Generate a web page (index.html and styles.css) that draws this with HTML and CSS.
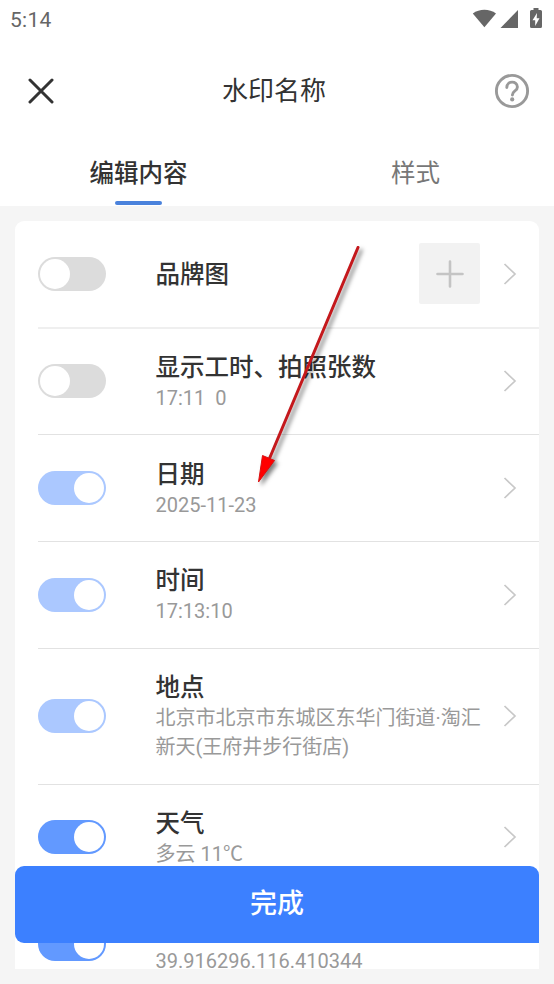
FILE: index.html
```html
<!DOCTYPE html>
<html lang="zh-CN">
<head>
<meta charset="utf-8">
<title>水印名称</title>
<link rel="stylesheet" href="styles.css">
</head>
<body>
<div class="screen">
  <div class="status">
    <span class="clock">5:14</span>
    <svg class="status-icons" width="72" height="24" viewBox="0 0 72 24">
      <path d="M.8 5.400C7.500.4 17.300.4 24 5.400L12.400 19.200z"/>
      <path d="M46 2v18H28.500z"/>
      <path fill-rule="evenodd" d="M61.500 0h5v2h2q1.500 0 1.500 1.500V18.500q0 1.500-1.500 1.500h-9q-1.500 0-1.500-1.500V3.500q0-1.500 1.500-1.500h2zM65 5l-4.500 7.200h2.700V18L67.500 10.200h-2.800z"/>
    </svg>
  </div>
  <header class="header">
    <svg class="close" width="26" height="26" viewBox="0 0 26 26"><path d="M2 2l22 22M24 2L2 24"/></svg>
    <h1>水印名称</h1>
    <svg class="help" width="36" height="36" viewBox="0 0 36 36">
      <circle cx="18" cy="18" r="15.600"/>
      <path d="M12.800 14.500c0-7 10.600-7 10.600-.6 0 4.400-5 3.600-5 8.200"/>
      <circle class="dot" cx="18.200" cy="26.400" r="2.100"/>
    </svg>
  </header>
  <nav class="tabs">
    <div class="tab active">编辑内容</div>
    <div class="tab">样式</div>
  </nav>
  <main class="card">
    <section class="row first">
      <i class="switch"></i>
      <div class="text"><h2>品牌图</h2></div>
      <div class="add"><svg width="28" height="28" viewBox="0 0 28 28"><path d="M14 1.500v25M1.500 14h25"/></svg></div>
      <svg class="chev" width="14" height="24" viewBox="0 0 14 24"><path d="M1.500 2L12 12 1.500 22"/></svg>
    </section>
    <section class="row">
      <i class="switch"></i>
      <div class="text"><h2>显示工时、拍照张数</h2><p class="spaced">17:11  0</p></div>
      <svg class="chev" width="14" height="24" viewBox="0 0 14 24"><path d="M1.500 2L12 12 1.500 22"/></svg>
    </section>
    <section class="row">
      <i class="switch locked"></i>
      <div class="text"><h2>日期</h2><p>2025-11-23</p></div>
      <svg class="chev" width="14" height="24" viewBox="0 0 14 24"><path d="M1.500 2L12 12 1.500 22"/></svg>
    </section>
    <section class="row">
      <i class="switch locked"></i>
      <div class="text"><h2>时间</h2><p>17:13:10</p></div>
      <svg class="chev" width="14" height="24" viewBox="0 0 14 24"><path d="M1.500 2L12 12 1.500 22"/></svg>
    </section>
    <section class="row tall">
      <i class="switch locked"></i>
      <div class="text"><h2>地点</h2><p>北京市北京市东城区东华门街道·淘汇<br>新天(王府井步行街店)</p></div>
      <svg class="chev" width="14" height="24" viewBox="0 0 14 24"><path d="M1.500 2L12 12 1.500 22"/></svg>
    </section>
    <section class="row">
      <i class="switch on"></i>
      <div class="text"><h2>天气</h2><p>多云 11℃</p></div>
      <svg class="chev" width="14" height="24" viewBox="0 0 14 24"><path d="M1.500 2L12 12 1.500 22"/></svg>
    </section>
    <section class="row">
      <i class="switch on"></i>
      <div class="text"><h2>经纬度</h2><p>39.916296.116.410344</p></div>
    </section>
  </main>
  <button class="done">完成</button>
  <svg class="arrow" width="130" height="260" viewBox="240 235 130 260">
    <path class="shaft" d="M358 247.500L268 462"/>
    <path class="head" d="M258.500 482L262.500 455.500L274.500 460.500z"/>
  </svg>
</div>
</body>
</html>
```
FILE: styles.css
```css
* { box-sizing: border-box; }
body { margin: 0; font-family: Roboto, "Noto Sans CJK SC", sans-serif; }
h1, h2, p { margin: 0; }
svg { display: block; flex: none; }

.screen {
  position: relative;
  width: 554px;
  height: 984px;
  overflow: hidden;
  background: #f5f5f5;
}

.status {
  display: flex;
  justify-content: space-between;
  align-items: flex-start;
  height: 40px;
  padding: 8px 10px 0 10px;
  background: #fff;
}
.clock { font-size: 21px; line-height: 24px; color: #666; letter-spacing: .3px; }
.status-icons { fill: #666; }

.header {
  display: flex;
  justify-content: space-between;
  align-items: center;
  height: 102px;
  padding: 0 24px 0 28px;
  background: #fff;
}
.header h1 { font-size: 26px; line-height: 36px; font-weight: 400; color: #333; }
.close { stroke: #333; stroke-width: 3; stroke-linecap: round; }
.help { fill: none; stroke: #999; stroke-width: 2.9; stroke-linecap: round; }
.help .dot { fill: #999; stroke: none; }

.tabs { display: flex; height: 64px; background: #fff; }
.tab {
  display: flex;
  flex: 1;
  flex-direction: column;
  align-items: center;
  justify-content: space-between;
  padding: 14px 0 1px;
  font-size: 24.500px;
  line-height: 36px;
  color: #777;
}
.tab.active { color: #333; font-weight: 500; }
.tab.active::after { content: ""; width: 47px; height: 4px; border-radius: 2px; background: #4a82dc; }

.card {
  width: 524px;
  height: 748px;
  margin: 15px 0 0 15px;
  overflow: hidden;
  border-radius: 9px 9px 0 0;
  background: #fff;
}
.row {
  display: flex;
  align-items: center;
  height: 106.700px;
  margin-left: 23px;
  padding-right: 22px;
  border-bottom: 1px solid #e2e2e2;
}
.row.first { height: 107.500px; border-bottom: 2px solid #efefef; }
.row.tall { height: 136px; }

.switch {
  position: relative;
  flex: none;
  width: 68px;
  height: 34px;
  border-radius: 17px;
  background: #dcdcdc;
}
.switch::after {
  content: "";
  position: absolute;
  top: 2px;
  left: 2px;
  width: 30px;
  height: 30px;
  border-radius: 50%;
  background: #fff;
}
.switch.locked { background: #abc8ff; }
.switch.on { background: #6299ff; }
.switch.locked::after, .switch.on::after { left: 36px; }

.text { flex: 1; min-width: 0; margin-left: 49.500px; padding-top: 2px; }
.text h2 { font-size: 24.500px; line-height: 32px; font-weight: 500; color: #333; white-space: nowrap; }
.text p { font-size: 20px; line-height: 29px; color: #999; white-space: nowrap; }
.text .spaced { white-space: pre; }

.add {
  display: grid;
  place-items: center;
  width: 61px;
  height: 61px;
  margin-right: 23px;
  border-radius: 2px;
  background: #f2f2f2;
}
.add svg { stroke: #c4c4c4; stroke-width: 2.6; stroke-linecap: round; }
.chev { fill: none; stroke: #c8c8c8; stroke-width: 1.7; }

.done {
  position: absolute;
  left: 15px;
  top: 866px;
  width: 524px;
  height: 77px;
  padding: 0;
  border: 0;
  border-radius: 9px 9px 0 9px;
  background: #3c80ff;
  color: #fff;
  font: 500 27px/77px Roboto, "Noto Sans CJK SC", sans-serif;
}

.arrow { position: absolute; left: 240px; top: 235px; filter: drop-shadow(3px 3px 2px rgba(0, 0, 0, .5)); }
.shaft { stroke: #c4181c; stroke-width: 3; stroke-linecap: round; }
.head { fill: #f00; stroke: #d81010; stroke-width: 1; }
```
